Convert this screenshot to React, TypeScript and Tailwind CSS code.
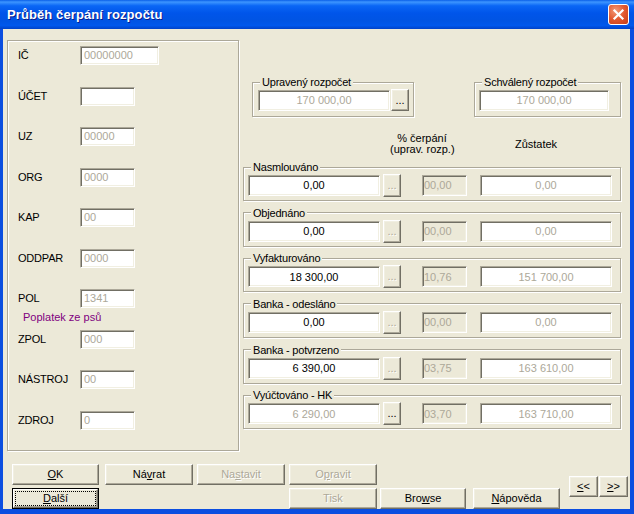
import React from 'react';

type FieldProps = {
  value?: string;
  className?: string;
  dim?: boolean;
  shaded?: boolean;
  center?: boolean;
};

// sunken edit box, classic XP look
const Field: React.FC<FieldProps> = ({ value = '', className = '', dim, shaded, center }) => (
  <div
    className={`flex items-center overflow-hidden whitespace-nowrap border border-t-[#aca899] border-l-[#aca899] border-b-white border-r-white shadow-[inset_1px_1px_0_#716f64,inset_-1px_-1px_0_#f1efe2] ${
      shaded ? 'bg-[#ece9d8]' : 'bg-white'
    } ${dim ? 'text-[#aca899]' : 'text-black'} ${center ? 'justify-center' : 'pl-[3px]'} ${className}`}
  >
    {value}
  </div>
);

type BtnProps = {
  children: React.ReactNode;
  className?: string;
  off?: boolean;
};

const Btn: React.FC<BtnProps> = ({ children, className = '', off }) => (
  <button
    type="button"
    className={`flex items-center justify-center leading-none border border-t-white border-l-white border-b-[#716f64] border-r-[#716f64] bg-[#ece9d8] shadow-[inset_-1px_-1px_0_#aca899,inset_1px_1px_0_#f1efe2] ${
      off ? 'text-[#aca899] [text-shadow:1px_1px_0_#fff]' : 'text-black'
    } ${className}`}
  >
    {children}
  </button>
);

// etched group box; padding goes on the inner div so the legend stays put
const Group: React.FC<{ label: string; className?: string; inner?: string; children: React.ReactNode }> = ({
  label,
  className = '',
  inner = '',
  children,
}) => (
  <fieldset className={`border border-[#aca899] shadow-[inset_1px_1px_0_#fff,1px_1px_0_#fff] ${className}`}>
    <legend className="ml-[7px] px-[2px] leading-[14px] tracking-[-0.2px] bg-[#ece9d8]">{label}</legend>
    <div className={inner}>{children}</div>
  </fieldset>
);

const leftRows = [
  { label: 'IČ', value: '00000000', w: 'w-[79px]' },
  { label: 'ÚČET', value: '', w: 'w-[55px]', live: true },
  { label: 'UZ', value: '00000', w: 'w-[55px]' },
  { label: 'ORG', value: '0000', w: 'w-[55px]' },
  { label: 'KAP', value: '00', w: 'w-[55px]' },
  { label: 'ODDPAR', value: '0000', w: 'w-[55px]' },
  { label: 'POL', value: '1341', w: 'w-[55px]', note: 'Poplatek ze psů' },
  { label: 'ZPOL', value: '000', w: 'w-[55px]' },
  { label: 'NÁSTROJ', value: '00', w: 'w-[55px]' },
  { label: 'ZDROJ', value: '0', w: 'w-[55px]' },
];

const rows = [
  { label: 'Nasmlouváno', value: '0,00', pct: '00,00', rest: '0,00' },
  { label: 'Objednáno', value: '0,00', pct: '00,00', rest: '0,00' },
  { label: 'Vyfakturováno', value: '18 300,00', pct: '10,76', rest: '151 700,00' },
  { label: 'Banka - odesláno', value: '0,00', pct: '00,00', rest: '0,00' },
  { label: 'Banka - potvrzeno', value: '6 390,00', pct: '03,75', rest: '163 610,00' },
  { label: 'Vyúčtováno - HK', value: '6 290,00', pct: '03,70', rest: '163 710,00', locked: true },
];

const App: React.FC = () => {
  return (
    <div className="flex flex-col w-[634px] h-[514px] bg-[#0b4ee0] text-[11px] text-black font-[family-name:'Liberation_Sans',Arial,sans-serif] select-none">
      {/* Title bar */}
      <div className="h-[29px] shrink-0 flex items-center pl-[7px] pr-[5px] bg-[linear-gradient(to_bottom,#0a5fe8_0%,#3d95ff_7%,#0a66f5_20%,#0055ea_45%,#0054e3_72%,#0058ec_88%,#0042c8_100%)]">
        <span className="text-white font-bold text-[13px] tracking-[0.1px] [text-shadow:1px_1px_0_#0a1e8c]">
          Průběh čerpání rozpočtu
        </span>
        <div className="ml-auto w-[21px] h-[21px] rounded-[3px] border border-white flex items-center justify-center bg-[radial-gradient(circle_at_35%_30%,#f29a78_0%,#e2582f_50%,#c53d16_100%)]">
          <svg width="13" height="13" viewBox="0 0 13 13">
            <path d="M2.5 2.5 L10.5 10.5 M10.5 2.5 L2.5 10.5" stroke="#fff" strokeWidth="2.2" strokeLinecap="square" />
          </svg>
        </div>
      </div>

      {/* Client area */}
      <div className="flex-1 ml-[3px] mr-[4px] mb-[5px] bg-[#ece9d8] flex flex-col pt-[11px]">
        <div className="flex items-start">
          {/* Left group with codes */}
          <div className="ml-[4px] w-[232px] h-[411px] border border-[#aca899] shadow-[inset_1px_1px_0_#fff,1px_1px_0_#fff] pt-[5px] pl-[10px]">
            {leftRows.map((r) => (
              <div key={r.label} className="h-[40.5px]">
                <div className="flex items-center h-[19px]">
                  <span className="w-[62px] tracking-[-0.2px]">{r.label}</span>
                  <Field value={r.value} dim={!r.live} className={`h-[19px] ${r.w}`} />
                </div>
                {r.note && <div className="pl-[5px] mt-[3px] leading-[13px] text-[#800080]">{r.note}</div>}
              </div>
            ))}
          </div>

          {/* Right column with amounts */}
          <div className="ml-[4px] w-[378px] pt-[35px] flex flex-col">
            <div className="flex">
              <Group label="Upravený rozpočet" className="ml-[9px] w-[162px]" inner="pl-[5px] pt-[1px] pb-[5px]">
                <div className="flex items-start">
                  <Field value="170 000,00" dim center className="w-[132px] h-[21px]" />
                  <Btn className="ml-[1px] -mt-[1px] w-[18px] h-[22px]">...</Btn>
                </div>
              </Group>
              <Group label="Schválený rozpočet" className="ml-auto w-[147px]" inner="pl-[4px] pt-[1px] pb-[5px]">
                <Field value="170 000,00" dim center className="w-[130px] h-[21px]" />
              </Group>
            </div>

            <div className="mt-[16px] h-[22px] flex items-center">
              <div className="ml-[147px] w-[64px] text-center leading-[11px] whitespace-nowrap">
                % čerpání
                <br />
                (uprav. rozp.)
              </div>
              <div className="ml-[52px] w-[60px] text-center">Zůstatek</div>
            </div>

            <div className="mt-[5px] flex flex-col gap-[4.66px]">
              {rows.map((r) => (
                <Group key={r.label} label={r.label} className="w-[378px]" inner="pl-[4px] pt-[1px] pb-[3px]">
                  <div className="flex items-start">
                    <Field value={r.value} dim={r.locked} center className="w-[132px] h-[21px]" />
                    <Btn off={!r.locked} className="ml-[3px] -mt-[1px] w-[18px] h-[23px]">
                      ...
                    </Btn>
                    <Field value={r.pct} dim shaded className="ml-[21px] w-[45px] h-[21px] !pl-[1px]" />
                    <Field value={r.rest} dim center className="ml-[13px] w-[132px] h-[21px]" />
                  </div>
                </Group>
              ))}
            </div>
          </div>
        </div>

        {/* Buttons */}
        <div className="mt-[13px] flex items-center pl-[9px]">
          <div className="flex flex-col gap-[3px]">
            <div className="flex">
              <Btn className="w-[87px] h-[21px]">
                <u>O</u>K
              </Btn>
              <Btn className="ml-[6px] w-[88px] h-[21px]">
                Ná<u>v</u>rat
              </Btn>
              <Btn off className="ml-[4px] w-[88px] h-[21px]">
                Na<u>s</u>tavit
              </Btn>
              <Btn off className="ml-[4px] w-[88px] h-[21px]">
                O<u>p</u>ravit
              </Btn>
            </div>
            <div className="flex">
              <button
                type="button"
                className="w-[87px] h-[21px] border border-black bg-[#ece9d8]"
              >
                <div className="h-full flex p-[1px] border border-t-white border-l-white border-b-[#716f64] border-r-[#716f64] shadow-[inset_-1px_-1px_0_#aca899]">
                  <span className="flex-1 flex items-center justify-center leading-none border border-dotted border-black">
                    <u>D</u>alší
                  </span>
                </div>
              </button>
              <Btn off className="ml-[190px] w-[88px] h-[21px]">
                Tisk
              </Btn>
              <Btn className="ml-[3px] w-[86px] h-[21px]">
                Bro<u>w</u>se
              </Btn>
              <Btn className="ml-[7px] w-[87px] h-[21px]">
                <u>N</u>ápověda
              </Btn>
            </div>
          </div>
          <Btn className="ml-[9px] w-[29px] h-[21px]">
            <u>&lt;</u>&lt;
          </Btn>
          <Btn className="ml-[1px] w-[29px] h-[21px]">
            <u>&gt;</u>&gt;
          </Btn>
        </div>
      </div>
    </div>
  );
};

export default App;
